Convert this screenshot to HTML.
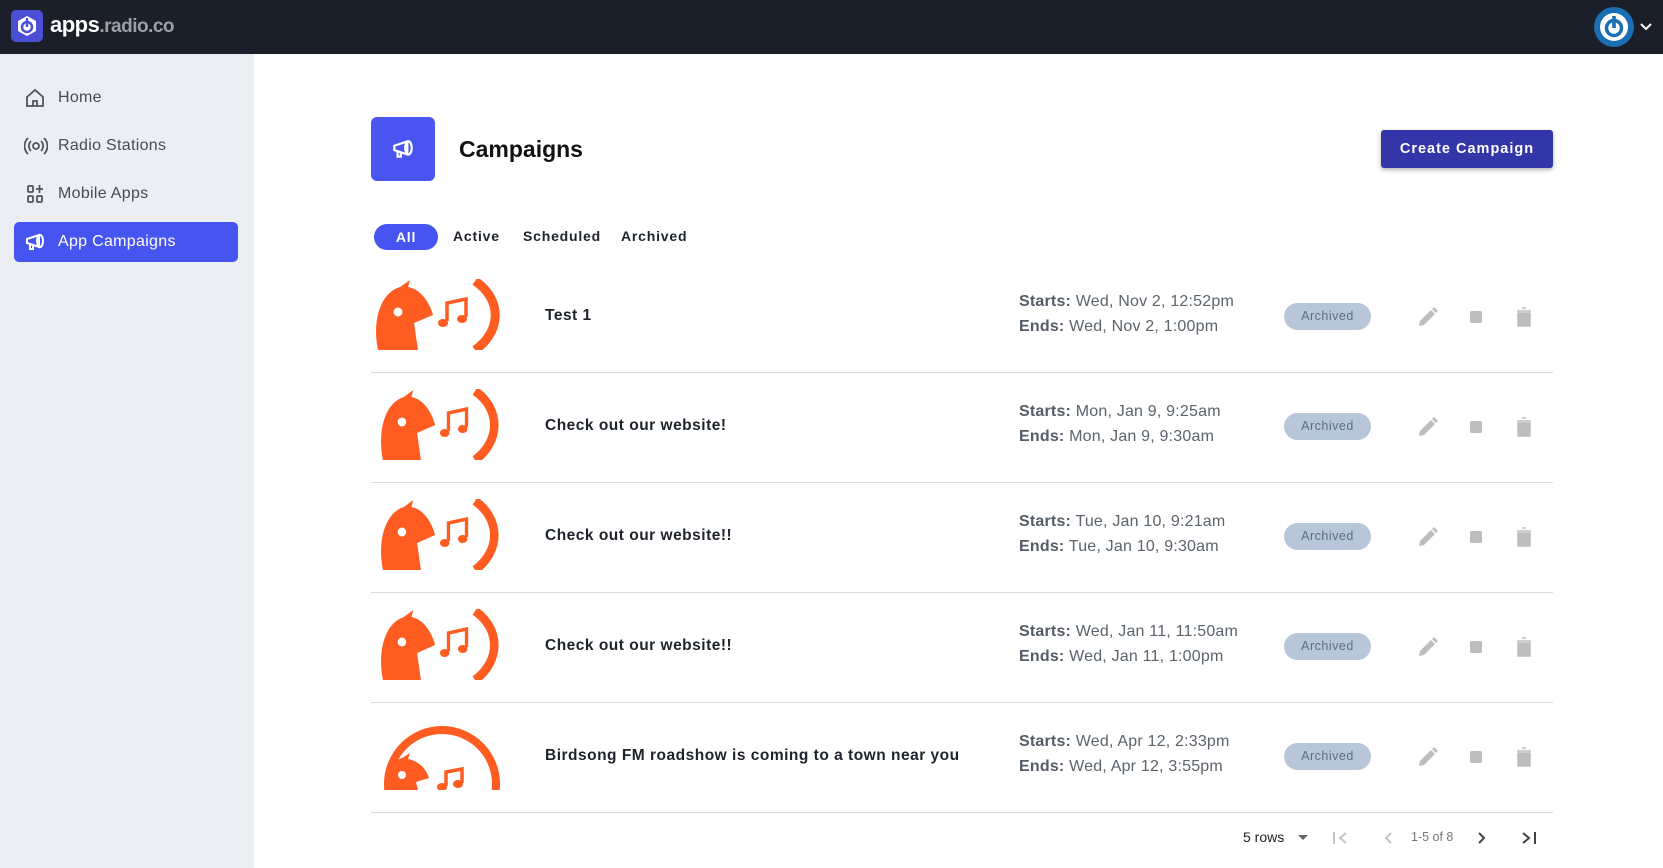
<!DOCTYPE html>
<html><head><meta charset="utf-8"><style>
*{box-sizing:border-box;margin:0;padding:0}
body{width:1663px;height:868px;overflow:hidden;font-family:"Liberation Sans",sans-serif;background:#fff;position:relative;color:#1c2129}
.top{position:absolute;left:0;top:0;width:1663px;height:54px;background:#1a1f29}
.side{position:absolute;left:0;top:54px;width:254px;height:814px;background:#ebeff3}
.nav{position:absolute;left:14px;width:224px;height:40px;display:flex;align-items:center;font-size:16px;color:#454c55;letter-spacing:.3px}
.nav svg{position:absolute;left:10px}
.nav span{position:absolute;left:44px}
.nav.act{background:#4755f0;color:#fff;border-radius:5px}
.abs{position:absolute}
.row-sep{position:absolute;left:371px;width:1182px;height:1px;background:#dcdcdc}
.title{position:absolute;left:545px;font-size:15.5px;font-weight:bold;letter-spacing:.5px;color:#1e232b}
.dates{position:absolute;left:1019px;font-size:16px;color:#5b636c;line-height:25px;letter-spacing:.2px}
.dates b{color:#545c66}
.badge{position:absolute;left:1284px;width:87px;height:27px;border-radius:14px;background:#b7c6d8;color:#5e6d80;font-size:12.5px;text-align:center;line-height:27px;letter-spacing:.5px}
.tab{position:absolute;top:228px;font-size:14px;font-weight:bold;letter-spacing:.8px;color:#1e232b}
</style></head><body>
<svg width="0" height="0" style="position:absolute"><defs>
<g id="logo"><path d="M2 71 C-4 42 4 14 24 8 L34 1 L32 8 C44 10 53 22 57 36 L38 44 L42 71 Z" fill="#ff5c21"/><circle cx="22" cy="33" r="4.5" fill="#fff"/><path d="M99 2 C126 20 126 52 99 71" stroke="#ff5c21" stroke-width="9" fill="none"/><path d="M71 42 V24 L90 20 V38" stroke="#ff5c21" stroke-width="3.5" fill="none"/><ellipse cx="67" cy="44" rx="5" ry="4" fill="#ff5c21"/><ellipse cx="86" cy="40" rx="5" ry="4" fill="#ff5c21"/></g>
<g id="acts"><path d="M0 19 L1 14 L12 3 L16 7 L5 18 Z M13 2 L15 0 L19 4 L17 6 Z" fill="#bdbdbd"/><rect x="51" y="4" width="12" height="12" rx="2" fill="#bdbdbd"/><path d="M98 4 H112 M103 1 H107 M99 6 H111 V19 H99 Z" fill="#bdbdbd" stroke="#bdbdbd" stroke-width="1.5"/></g></defs></svg>
<div class="top"></div>
<svg class="abs" style="left:11px;top:10px" width="32" height="32" viewBox="0 0 32 32"><rect x="0" y="0" width="32" height="32" rx="5" fill="#4a4fd6"/><path d="M16 6 L25 11 V21 L16 26 L7 21 V11 Z" fill="#fff"/><circle cx="16" cy="17" r="5" fill="none" stroke="#4a4fd6" stroke-width="2.5"/><rect x="14.8" y="8" width="2.4" height="9" fill="#4a4fd6"/></svg>
<div class="abs" style="left:50px;top:12px;font-size:22px;font-weight:bold;color:#fff;letter-spacing:-.5px">apps<span style="color:#9aa0a8;font-weight:bold;font-size:19px">.radio.co</span></div>
<svg class="abs" style="left:1593px;top:6px" width="42" height="42" viewBox="0 0 42 42"><circle cx="21" cy="21" r="20" fill="#1a6fb4"/><circle cx="21" cy="21" r="14" fill="#fff"/><circle cx="21" cy="22" r="7.5" fill="none" stroke="#1a6fb4" stroke-width="3.5"/><rect x="19.2" y="10" width="3.6" height="12" fill="#1a6fb4"/></svg>
<svg class="abs" style="left:1640px;top:22px" width="12" height="9" viewBox="0 0 12 9"><path d="M1 2 L6 7 L11 2" stroke="#fff" stroke-width="2" fill="none"/></svg>

<div class="side"></div>
<div class="nav" style="top:78px"><svg width="22" height="22" viewBox="0 0 22 22" fill="none" stroke="#4f5660" stroke-width="1.8"><path d="M3 10 L11 3 L19 10 V19 H3 Z"/><path d="M9 19 V14 H13 V19"/></svg><span>Home</span></div>
<div class="nav" style="top:126px"><svg width="24" height="22" viewBox="0 0 24 22" fill="none" stroke="#4f5660" stroke-width="1.8"><circle cx="12" cy="11" r="3"/><path d="M7 6 A7 7 0 0 0 7 16 M17 6 A7 7 0 0 1 17 16 M4 3 A11 11 0 0 0 4 19 M20 3 A11 11 0 0 1 20 19"/></svg><span>Radio Stations</span></div>
<div class="nav" style="top:174px"><svg width="22" height="22" viewBox="0 0 22 22" fill="none" stroke="#4f5660" stroke-width="1.8"><rect x="4" y="3" width="5" height="6" rx="1"/><rect x="4" y="13" width="5" height="6" rx="1"/><rect x="13" y="13" width="5" height="6" rx="1"/><path d="M15.5 2 V10 M12 6 H19"/></svg><span>Mobile Apps</span></div>
<div class="nav act" style="top:222px"><svg width="22" height="22" viewBox="0 0 22 22" fill="none" stroke="#fff" stroke-width="2"><path d="M3 8 L15 4 V16 L3 12 Z"/><ellipse cx="16" cy="10" rx="3" ry="6"/><path d="M6 13 V18 H9 V14"/></svg><span>App Campaigns</span></div>

<div class="abs" style="left:371px;top:117px;width:64px;height:64px;background:#4a55f0;border-radius:6px"></div>
<svg class="abs" style="left:391px;top:137px" width="24" height="24" viewBox="0 0 22 22" fill="none" stroke="#fff" stroke-width="2"><path d="M3 8 L15 4 V16 L3 12 Z"/><ellipse cx="16" cy="10" rx="3" ry="6"/><path d="M6 13 V18 H9 V14"/></svg>
<div class="abs" style="left:459px;top:136px;font-size:23px;font-weight:bold;color:#111">Campaigns</div>
<div class="abs" style="left:1381px;top:130px;width:172px;height:38px;background:#3236a8;border-radius:3px;box-shadow:0 2px 5px rgba(0,0,0,.3);color:#fff;font-size:14.5px;font-weight:bold;letter-spacing:1px;text-align:center;line-height:38px">Create Campaign</div>

<div class="abs" style="left:374px;top:224px;width:64px;height:26px;border-radius:13px;background:#4755f0;color:#fff;font-size:14px;font-weight:bold;text-align:center;line-height:26px;letter-spacing:.8px">All</div>
<div class="tab" style="left:453px">Active</div>
<div class="tab" style="left:523px">Scheduled</div>
<div class="tab" style="left:621px">Archived</div>

<svg class="abs" style="left:376px;top:279px" width="132" height="71" viewBox="0 0 132 71"><use href="#logo"/></svg>
<div class="title" style="top:307px">Test 1</div>
<div class="dates" style="top:289px"><b>Starts:</b> Wed, Nov 2, 12:52pm<br><b>Ends:</b> Wed, Nov 2, 1:00pm</div>
<div class="badge" style="top:303px">Archived</div>
<div class="row-sep" style="top:372px"></div>

<svg class="abs" style="left:381px;top:389px" width="122" height="71" viewBox="0 0 122 71"><use href="#logo" transform="translate(0,0) scale(0.95,1)"/></svg>
<div class="title" style="top:417px">Check out our website!</div>
<div class="dates" style="top:399px"><b>Starts:</b> Mon, Jan 9, 9:25am<br><b>Ends:</b> Mon, Jan 9, 9:30am</div>
<div class="badge" style="top:413px">Archived</div>
<div class="row-sep" style="top:482px"></div>

<svg class="abs" style="left:381px;top:499px" width="122" height="71" viewBox="0 0 122 71"><use href="#logo" transform="scale(0.95,1)"/></svg>
<div class="title" style="top:527px">Check out our website!!</div>
<div class="dates" style="top:509px"><b>Starts:</b> Tue, Jan 10, 9:21am<br><b>Ends:</b> Tue, Jan 10, 9:30am</div>
<div class="badge" style="top:523px">Archived</div>
<div class="row-sep" style="top:592px"></div>

<svg class="abs" style="left:381px;top:609px" width="122" height="71" viewBox="0 0 122 71"><use href="#logo" transform="scale(0.95,1)"/></svg>
<div class="title" style="top:637px">Check out our website!!</div>
<div class="dates" style="top:619px"><b>Starts:</b> Wed, Jan 11, 11:50am<br><b>Ends:</b> Wed, Jan 11, 1:00pm</div>
<div class="badge" style="top:623px;top:633px">Archived</div>
<div class="row-sep" style="top:702px"></div>

<svg class="abs" style="left:376px;top:720px" width="132" height="70" viewBox="0 0 132 70"><circle cx="66" cy="64" r="54" stroke="#ff5c21" stroke-width="8" fill="none"/><path d="M9 70 C7 55 14 42 26 38 L34 33 L32 39 C42 41 50 48 53 58 L40 62 L42 70 Z" fill="#ff5c21"/><circle cx="26" cy="55" r="4" fill="#fff"/><path d="M70 66 V52 L86 49 V63" stroke="#ff5c21" stroke-width="3.5" fill="none"/><ellipse cx="66" cy="67" rx="5" ry="4" fill="#ff5c21"/><ellipse cx="82" cy="64" rx="5" ry="4" fill="#ff5c21"/></svg>
<div class="title" style="top:747px">Birdsong FM roadshow is coming to a town near you</div>
<div class="dates" style="top:729px"><b>Starts:</b> Wed, Apr 12, 2:33pm<br><b>Ends:</b> Wed, Apr 12, 3:55pm</div>
<div class="badge" style="top:743px">Archived</div>
<div class="row-sep" style="top:812px"></div>

<svg class="abs" style="left:1419px;top:307px" width="114" height="20"><use href="#acts"/></svg>
<svg class="abs" style="left:1419px;top:417px" width="114" height="20"><use href="#acts"/></svg>
<svg class="abs" style="left:1419px;top:527px" width="114" height="20"><use href="#acts"/></svg>
<svg class="abs" style="left:1419px;top:637px" width="114" height="20"><use href="#acts"/></svg>
<svg class="abs" style="left:1419px;top:747px" width="114" height="20"><use href="#acts"/></svg>

<div class="abs" style="left:1243px;top:829px;font-size:14px;color:#222">5 rows</div>
<svg class="abs" style="left:1298px;top:835px" width="12" height="7"><path d="M0 0 H10 L5 5 Z" fill="#666"/></svg>
<svg class="abs" style="left:1332px;top:830px" width="16" height="16" fill="none" stroke="#c4c4c4" stroke-width="2"><path d="M2 2 V14 M14 3 L8 8 L14 13"/></svg>
<svg class="abs" style="left:1382px;top:830px" width="12" height="16" fill="none" stroke="#c4c4c4" stroke-width="2"><path d="M9 3 L4 8 L9 13"/></svg>
<div class="abs" style="left:1411px;top:830px;font-size:12.5px;color:#777">1-5 of 8</div>
<svg class="abs" style="left:1476px;top:830px" width="12" height="16" fill="none" stroke="#444" stroke-width="2"><path d="M3 3 L8 8 L3 13"/></svg>
<svg class="abs" style="left:1521px;top:830px" width="16" height="16" fill="none" stroke="#444" stroke-width="2"><path d="M2 3 L8 8 L2 13 M14 2 V14"/></svg>
</body></html>
